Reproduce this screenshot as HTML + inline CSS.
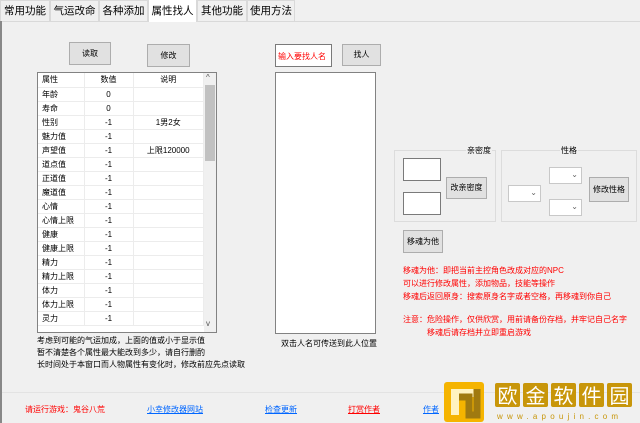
<!DOCTYPE html>
<html><head><meta charset="utf-8"><style>
*{margin:0;padding:0;box-sizing:border-box}
body{width:640px;height:423px;background:#f0f0f0;font-family:"Liberation Sans","Noto Sans CJK SC",sans-serif;font-size:8px;color:#000;position:relative;overflow:hidden}
.a{position:absolute;white-space:nowrap}
.tab{position:absolute;top:0;height:21px;border:1px solid #d9d9d9;border-bottom:none;background:#f0f0f0;font-size:10.5px;line-height:21px;text-align:center}
.btn{position:absolute;background:#e1e1e1;border:1px solid #adadad;text-align:center;font-size:8px}
.inp{position:absolute;background:#fff;border:1px solid #7a7a7a}
.sel{position:absolute;background:#fff;border:1px solid #c8c8c8;font-size:8px;color:#666;text-align:right;padding-right:3px;line-height:14px}
table{border-collapse:collapse}
td{height:14px;border-right:1px solid #ececec;border-bottom:1px solid #ececec;font-size:8px;padding:0;line-height:13px}
.red{color:#f00}
.lnk{color:#0066ff;text-decoration:underline}
</style></head><body>
<div class="a" style="left:0;top:21px;width:640px;height:1px;background:#d9d9d9"></div>
<div class="a" style="left:0;top:21px;width:2px;height:402px;background:#888"></div>
<div class="tab" style="left:0;width:50px">常用功能</div>
<div class="tab" style="left:50px;width:49px">气运改命</div>
<div class="tab" style="left:99px;width:49px">各种添加</div>
<div class="tab" style="left:148px;width:49px;background:#fff;height:23px;top:-1px;line-height:22px">属性找人</div>
<div class="tab" style="left:197px;width:50px">其他功能</div>
<div class="tab" style="left:247px;width:48px">使用方法</div>

<div class="btn" style="left:69px;top:42px;width:42px;height:23px;line-height:21px">读取</div>
<div class="btn" style="left:147px;top:44px;width:43px;height:23px;line-height:21px">修改</div>

<div class="a" style="left:37px;top:72px;width:180px;height:261px;background:#fff;border:1px solid #828282;overflow:hidden">
<table style="width:166px">
<tr><td style="width:46px;padding-left:4px">属性</td><td style="width:49px;text-align:center">数值</td><td style="text-align:center">说明</td></tr>
<tr><td style="padding-left:4px">年龄</td><td style="text-align:center">0</td><td></td></tr>
<tr><td style="padding-left:4px">寿命</td><td style="text-align:center">0</td><td></td></tr>
<tr><td style="padding-left:4px">性别</td><td style="text-align:center">-1</td><td style="text-align:center">1男2女</td></tr>
<tr><td style="padding-left:4px">魅力值</td><td style="text-align:center">-1</td><td></td></tr>
<tr><td style="padding-left:4px">声望值</td><td style="text-align:center">-1</td><td style="text-align:center">上限120000</td></tr>
<tr><td style="padding-left:4px">道点值</td><td style="text-align:center">-1</td><td></td></tr>
<tr><td style="padding-left:4px">正道值</td><td style="text-align:center">-1</td><td></td></tr>
<tr><td style="padding-left:4px">魔道值</td><td style="text-align:center">-1</td><td></td></tr>
<tr><td style="padding-left:4px">心情</td><td style="text-align:center">-1</td><td></td></tr>
<tr><td style="padding-left:4px">心情上限</td><td style="text-align:center">-1</td><td></td></tr>
<tr><td style="padding-left:4px">健康</td><td style="text-align:center">-1</td><td></td></tr>
<tr><td style="padding-left:4px">健康上限</td><td style="text-align:center">-1</td><td></td></tr>
<tr><td style="padding-left:4px">精力</td><td style="text-align:center">-1</td><td></td></tr>
<tr><td style="padding-left:4px">精力上限</td><td style="text-align:center">-1</td><td></td></tr>
<tr><td style="padding-left:4px">体力</td><td style="text-align:center">-1</td><td></td></tr>
<tr><td style="padding-left:4px">体力上限</td><td style="text-align:center">-1</td><td></td></tr>
<tr><td style="padding-left:4px">灵力</td><td style="text-align:center">-1</td><td></td></tr>
</table>
<div class="a" style="left:166px;top:0;width:13px;height:259px;background:#f0f0f0"></div>
<div class="a" style="left:167px;top:12px;width:10px;height:76px;background:#c1c1c1"></div>
<div class="a" style="left:168px;top:0;font-size:8px;color:#555">^</div>
<div class="a" style="left:168px;top:246px;font-size:8px;color:#555">v</div>
</div>
<div class="a" style="left:37px;top:335px;line-height:12px">考虑到可能的气运加成，上面的值或小于显示值<br>暂不清楚各个属性最大能改到多少，请自行删酌<br>长时间处于本窗口而人物属性有变化时，修改前应先点读取</div>

<div class="inp" style="left:275px;top:44px;width:57px;height:23px;color:#f00;font-size:8px;padding:6px 0 0 2px;overflow:hidden">输入要找人名</div>
<div class="btn" style="left:342px;top:44px;width:39px;height:22px;line-height:20px">找人</div>
<div class="inp" style="left:275px;top:72px;width:101px;height:262px;border-color:#828282"></div>
<div class="a" style="left:281px;top:338px">双击人名可传送到此人位置</div>

<div class="a" style="left:394px;top:150px;width:102px;height:72px;border:1px solid #dcdcdc"></div>
<div class="a" style="left:466px;top:145px;background:#f0f0f0;padding:0 1px">亲密度</div>
<div class="inp" style="left:403px;top:158px;width:38px;height:23px"></div>
<div class="inp" style="left:403px;top:192px;width:38px;height:23px"></div>
<div class="btn" style="left:446px;top:177px;width:41px;height:22px;line-height:20px">改亲密度</div>
<div class="a" style="left:501px;top:150px;width:136px;height:72px;border:1px solid #dcdcdc"></div>
<div class="a" style="left:560px;top:145px;background:#f0f0f0;padding:0 1px">性格</div>
<div class="sel" style="left:508px;top:185px;width:33px;height:17px">⌄</div>
<div class="sel" style="left:549px;top:167px;width:33px;height:17px">⌄</div>
<div class="sel" style="left:549px;top:199px;width:33px;height:17px">⌄</div>
<div class="btn" style="left:589px;top:177px;width:40px;height:25px;line-height:23px">修改性格</div>
<div class="btn" style="left:403px;top:230px;width:40px;height:23px;line-height:21px">移魂为他</div>
<div class="a red" style="left:403px;top:264px;line-height:13px">移魂为他：即把当前主控角色改成对应的NPC<br>可以进行修改属性，添加物品，技能等操作<br>移魂后返回原身：搜索原身名字或者空格，再移魂到你自己</div>
<div class="a red" style="left:403px;top:313px;line-height:13px">注意：危险操作，仅供欣赏，用前请备份存档，并牢记自己名字<br><span style="padding-left:24px">移魂后请存档并立即重启游戏</span></div>

<div class="a" style="left:2px;top:392px;width:638px;height:1px;background:#e3e3e3"></div>
<div class="a red" style="left:25px;top:404px">请运行游戏：鬼谷八荒</div>
<div class="a lnk" style="left:147px;top:404px">小幸修改器网站</div>
<div class="a lnk" style="left:265px;top:404px">检查更新</div>
<div class="a red" style="left:348px;top:404px;text-decoration:underline">打赏作者</div>
<div class="a lnk" style="left:423px;top:404px">作者</div>

<svg class="a" style="left:440px;top:375px" width="200" height="48" viewBox="0 0 200 48">
<rect x="4" y="7" width="40" height="40" rx="3" fill="#f5b400"/>
<path d="M11 14h26v8h-18v18h-8z" fill="#fff3c0"/>
<path d="M19 22h10v18h8v-26" fill="none" stroke="#a07a10" stroke-width="7"/>
<g fill="#c8960a">
<rect x="55" y="8" width="25" height="24" rx="2"/><rect x="83" y="8" width="25" height="24" rx="2"/><rect x="111" y="8" width="25" height="24" rx="2"/><rect x="139" y="8" width="25" height="24" rx="2"/><rect x="167" y="8" width="25" height="24" rx="2"/>
</g>
<g fill="#fff" font-family="Noto Sans CJK SC,sans-serif" font-size="20" text-anchor="middle">
<text x="67.5" y="28">欧</text><text x="95.5" y="28">金</text><text x="123.5" y="28">软</text><text x="151.5" y="28">件</text><text x="179.5" y="28">园</text>
</g>
<text x="57" y="44" font-family="Liberation Sans,sans-serif" font-size="8" fill="#c8960a" letter-spacing="4.2">www.apoujin.com</text>
</svg>
</body></html>
